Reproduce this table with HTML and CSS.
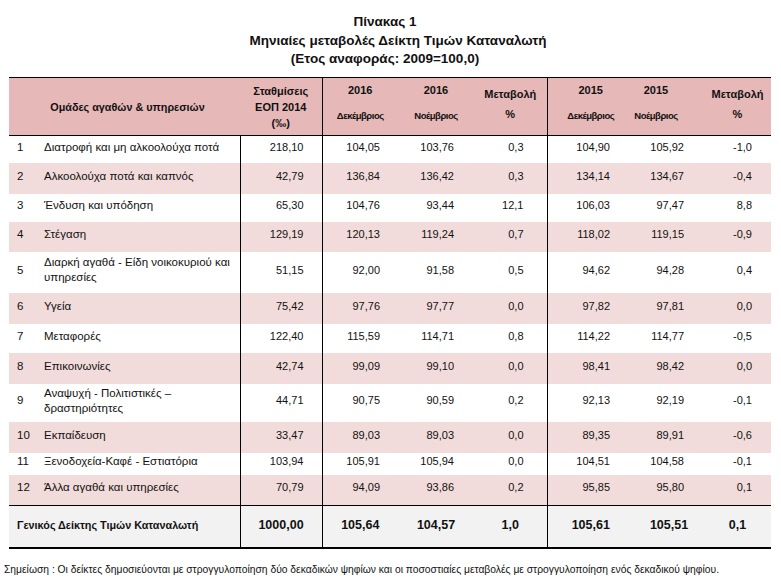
FILE: index.html
```html
<!DOCTYPE html>
<html lang="el">
<head>
<meta charset="utf-8">
<title>Πίνακας 1</title>
<link rel="stylesheet" href="styles.css">
</head>
<body>
<div class="title">
  <div class="t1">Πίνακας 1</div>
  <div class="t2">Μηνιαίες μεταβολές Δείκτη Τιμών Καταναλωτή</div>
  <div class="t3">(Ετος αναφοράς: 2009=100,0)</div>
</div>
<table class="cpi">
  <colgroup>
    <col class="c-no"><col class="c-name"><col class="c-w"><col class="c-d16"><col class="c-n16"><col class="c-p16"><col class="c-d15"><col class="c-n15"><col class="c-p15">
  </colgroup>
  <thead>
    <tr class="head">
      <th colspan="2" class="h-group">Ομάδες αγαθών &amp; υπηρεσιών</th>
      <th class="h-w vr">Σταθμίσεις<br>ΕΟΠ 2014<br>(‰)</th>
      <th class="vl"><div class="yr">2016</div><div class="mo">Δεκέμβριος</div></th>
      <th><div class="yr">2016</div><div class="mo">Νοέμβριος</div></th>
      <th class="vr"><div class="pc">Μεταβολή</div><div class="pcs">%</div></th>
      <th><div class="yr">2015</div><div class="mo">Δεκέμβριος</div></th>
      <th class="h-n15"><div class="yr">2015</div><div class="mo">Νοέμβριος</div></th>
      <th><div class="pc">Μεταβολή</div><div class="pcs">%</div></th>
    </tr>
  </thead>
  <tbody>
    <tr class="h27"><td class="no">1</td><td class="name">Διατροφή και μη αλκοολούχα ποτά</td><td class="w vr vl">218,10</td><td class="d16">104,05</td><td class="n16">103,76</td><td class="p16 vr">0,3</td><td class="d15">104,90</td><td class="n15">105,92</td><td class="p15">-1,0</td></tr>
    <tr class="h31 pink"><td class="no">2</td><td class="name">Αλκοολούχα ποτά και καπνός</td><td class="w vr vl">42,79</td><td class="d16">136,84</td><td class="n16">136,42</td><td class="p16 vr">0,3</td><td class="d15">134,14</td><td class="n15">134,67</td><td class="p15">-0,4</td></tr>
    <tr class="h28"><td class="no">3</td><td class="name">Ένδυση και υπόδηση</td><td class="w vr vl">65,30</td><td class="d16">104,76</td><td class="n16">93,44</td><td class="p16 vr">12,1</td><td class="d15">106,03</td><td class="n15">97,47</td><td class="p15">8,8</td></tr>
    <tr class="h30 pink"><td class="no">4</td><td class="name">Στέγαση</td><td class="w vr vl">129,19</td><td class="d16">120,13</td><td class="n16">119,24</td><td class="p16 vr">0,7</td><td class="d15">118,02</td><td class="n15">119,15</td><td class="p15">-0,9</td></tr>
    <tr class="h41"><td class="no">5</td><td class="name">Διαρκή αγαθά - Είδη νοικοκυριού και υπηρεσίες</td><td class="w vr vl">51,15</td><td class="d16">92,00</td><td class="n16">91,58</td><td class="p16 vr">0,5</td><td class="d15">94,62</td><td class="n15">94,28</td><td class="p15">0,4</td></tr>
    <tr class="h31 pink"><td class="no">6</td><td class="name">Υγεία</td><td class="w vr vl">75,42</td><td class="d16">97,76</td><td class="n16">97,77</td><td class="p16 vr">0,0</td><td class="d15">97,82</td><td class="n15">97,81</td><td class="p15">0,0</td></tr>
    <tr class="h29"><td class="no">7</td><td class="name">Μεταφορές</td><td class="w vr vl">122,40</td><td class="d16">115,59</td><td class="n16">114,71</td><td class="p16 vr">0,8</td><td class="d15">114,22</td><td class="n15">114,77</td><td class="p15">-0,5</td></tr>
    <tr class="h31 pink"><td class="no">8</td><td class="name">Επικοινωνίες</td><td class="w vr vl">42,74</td><td class="d16">99,09</td><td class="n16">99,10</td><td class="p16 vr">0,0</td><td class="d15">98,41</td><td class="n15">98,42</td><td class="p15">0,0</td></tr>
    <tr class="h38"><td class="no">9</td><td class="name">Αναψυχή - Πολιτιστικές –<br>δραστηριότητες</td><td class="w vr vl">44,71</td><td class="d16">90,75</td><td class="n16">90,59</td><td class="p16 vr">0,2</td><td class="d15">92,13</td><td class="n15">92,19</td><td class="p15">-0,1</td></tr>
    <tr class="h31 pink"><td class="no">10</td><td class="name">Εκπαίδευση</td><td class="w vr vl">33,47</td><td class="d16">89,03</td><td class="n16">89,03</td><td class="p16 vr">0,0</td><td class="d15">89,35</td><td class="n15">89,91</td><td class="p15">-0,6</td></tr>
    <tr class="h22"><td class="no">11</td><td class="name">Ξενοδοχεία-Καφέ - Εστιατόρια</td><td class="w vr vl">103,94</td><td class="d16">105,91</td><td class="n16">105,94</td><td class="p16 vr">0,0</td><td class="d15">104,51</td><td class="n15">104,58</td><td class="p15">-0,1</td></tr>
    <tr class="h31 pink"><td class="no">12</td><td class="name">Άλλα αγαθά και υπηρεσίες</td><td class="w vr vl">70,79</td><td class="d16">94,09</td><td class="n16">93,86</td><td class="p16 vr">0,2</td><td class="d15">95,85</td><td class="n15">95,80</td><td class="p15">0,1</td></tr>
  </tbody>
  <tfoot>
    <tr class="total">
      <td colspan="2" class="tname">Γενικός Δείκτης Τιμών Καταναλωτή</td><td class="tw vr vl">1000,00</td><td class="tc">105,64</td><td class="tc">104,57</td><td class="tc vr">1,0</td><td class="tc">105,61</td><td class="tc">105,51</td><td class="tc">0,1</td>
    </tr>
  </tfoot>
</table>
<p class="note">Σημείωση : Οι δείκτες δημοσιεύονται με στρογγυλοποίηση δύο δεκαδικών ψηφίων και οι ποσοστιαίες μεταβολές με στρογγυλοποίηση ενός δεκαδικού ψηφίου.</p>
</body>
</html>
```
FILE: styles.css
```css
html, body {
  margin: 0;
  padding: 0;
  background: #ffffff;
}
body {
  font-family: "Liberation Sans", Arial, sans-serif;
  color: #111;
  width: 781px;
}
.title {
  padding-top: 13px;
  height: 64px;
  font-weight: bold;
  font-size: 13.5px;
  line-height: 18.5px;
  text-align: center;
}
.t1, .t3 { margin-right: 11px; }
.t2 { margin-left: 15px; }

.cpi {
  margin-left: 9px;
  border-collapse: collapse;
  table-layout: fixed;
  width: 762px;
  font-size: 11px;
  border-top: 1px solid #000;
}
.c-no { width: 27px; }
.c-name { width: 204px; }
.c-w { width: 82px; }
.c-d16 { width: 76px; }
.c-n16 { width: 76px; }
.c-p16 { width: 73px; }
.c-d15 { width: 87px; }
.c-n15 { width: 70px; }
.c-p15 { width: 67px; }

.cpi th, .cpi td { padding: 0; }

.head {
  background: #e6b8b7;
  height: 58px;
  border-bottom: 1px solid #000;
}
.head th {
  font-weight: bold;
  font-size: 11px;
  text-align: center;
  vertical-align: top;
}
.head th.h-group {
  vertical-align: middle;
  font-size: 10.8px;
  padding-left: 6px;
}
.head th.h-w {
  line-height: 16px;
  padding-top: 5px;
}
.head th.h-n15 { padding-right: 26px; }
.yr { padding-top: 5px; line-height: 14px; }
.mo {
  margin-top: 13px;
  font-size: 9.5px;
  letter-spacing: -0.5px;
  line-height: 12px;
}
.pc { padding-top: 9px; line-height: 14px; }
.pcs { margin-top: 6px; line-height: 14px; }

.vr { border-right: 1px solid #000; }
.vl { border-left: 1px solid #000; }

.cpi tbody td {
  vertical-align: middle;
  padding-bottom: 4px;
  line-height: 15px;
}
.pink { background: #f2dcdb; }
.cpi tbody td.no { padding-left: 8px; font-size: 11.5px; }
.cpi tbody td.name { padding-left: 8px; padding-right: 4px; font-size: 11.5px; }
.cpi tbody td.w { text-align: right; padding-right: 18px; }
.cpi tbody td.d16 { text-align: right; padding-right: 18px; }
.cpi tbody td.n16 { text-align: right; padding-right: 20px; }
.cpi tbody td.p16 { text-align: right; padding-right: 23px; }
.cpi tbody td.d15 { text-align: right; padding-right: 24px; }
.cpi tbody td.n15 { text-align: right; padding-right: 20px; }
.cpi tbody td.p15 { text-align: right; padding-right: 19px; }

.h22 { height: 22px; }
.h27 { height: 27px; }
.h28 { height: 28px; }
.h29 { height: 29px; }
.h30 { height: 30px; }
.h31 { height: 31px; }
.h38 { height: 38px; }
.h41 { height: 41px; }

.total {
  background: #f2f2f2;
  height: 42px;
  border-top: 1px solid #000;
  border-bottom: 2px solid #000;
  font-weight: bold;
  font-size: 12.5px;
}
.total td { vertical-align: middle; }
.cpi .total td { padding-bottom: 3px; }
.cpi .total td.tname { padding-left: 8px; font-size: 10.8px; }
.tw, .tc { text-align: center; }

.note {
  margin: 15px 0 0 4px;
  font-size: 10.3px;
  line-height: 12px;
  white-space: nowrap;
}
```
